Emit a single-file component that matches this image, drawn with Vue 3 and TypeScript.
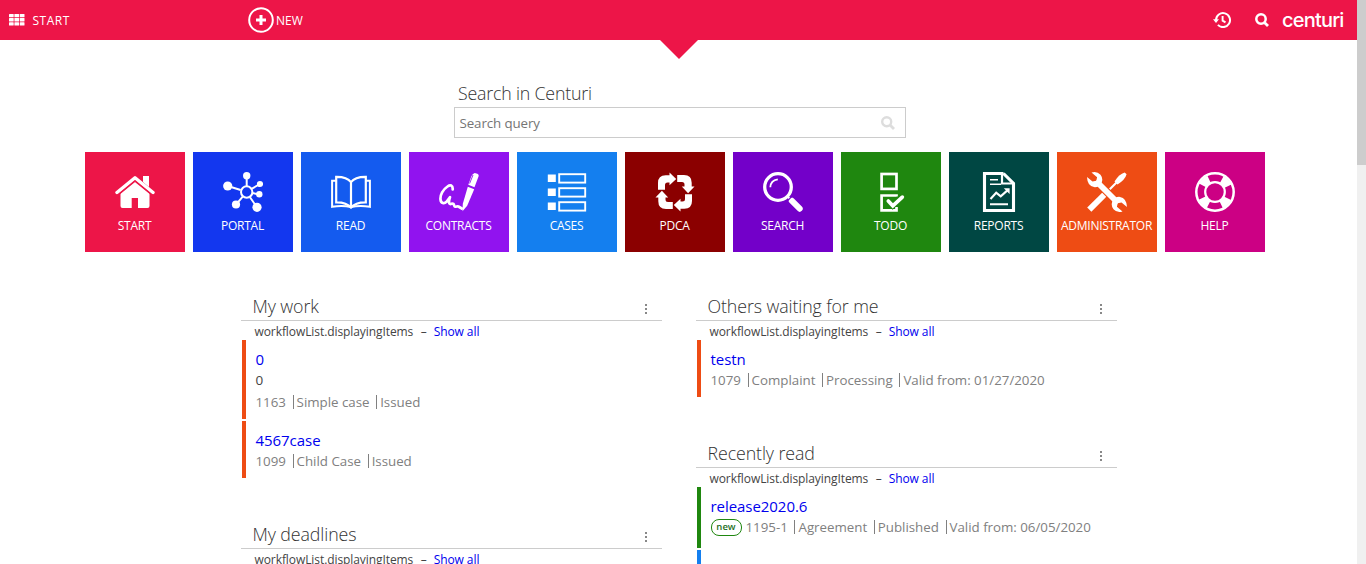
<script setup lang="ts">
interface Tile {
  label: string
  tone: string
}
interface Item {
  title: string
  note?: string
  meta: string[]
  tone: string
  badge?: string
}
interface Section {
  title: string
  items: Item[]
}

const tiles: Tile[] = [
  { label: 'START', tone: 'start' },
  { label: 'PORTAL', tone: 'portal' },
  { label: 'READ', tone: 'read' },
  { label: 'CONTRACTS', tone: 'contracts' },
  { label: 'CASES', tone: 'cases' },
  { label: 'PDCA', tone: 'pdca' },
  { label: 'SEARCH', tone: 'search' },
  { label: 'TODO', tone: 'todo' },
  { label: 'REPORTS', tone: 'reports' },
  { label: 'ADMINISTRATOR', tone: 'admin' },
  { label: 'HELP', tone: 'help' },
]

const columns: Section[][] = [
  [
    {
      title: 'My work',
      items: [
        { title: '0', note: '0', meta: ['1163', 'Simple case', 'Issued'], tone: 'orange' },
        { title: '4567case', meta: ['1099', 'Child Case', 'Issued'], tone: 'orange' },
      ],
    },
    { title: 'My deadlines', items: [] },
  ],
  [
    {
      title: 'Others waiting for me',
      items: [
        { title: 'testn', meta: ['1079', 'Complaint', 'Processing', 'Valid from: 01/27/2020'], tone: 'orange' },
      ],
    },
    {
      title: 'Recently read',
      items: [
        {
          title: 'release2020.6',
          meta: ['1195-1', 'Agreement', 'Published', 'Valid from: 06/05/2020'],
          tone: 'green',
          badge: 'new',
        },
        { title: '', meta: [], tone: 'blue' },
      ],
    },
  ],
]
</script>

<template>
  <div class="page">
    <div class="content">
      <header class="topbar">
        <div class="nav-start">
          <svg class="grid-icon" width="16" height="12" viewBox="0 0 16 12" fill="#fff">
            <template v-for="r in 3" :key="r">
              <rect v-for="c in 3" :key="c" :x="(c - 1) * 5.4" :y="(r - 1) * 4.1" width="4.7" height="3.3" rx=".5" />
            </template>
          </svg>
          <span class="nav-text">START</span>
        </div>
        <div class="nav-new">
          <svg width="26" height="26" viewBox="0 0 26 26" fill="none" stroke="#fff">
            <circle cx="13" cy="13" r="11.8" stroke-width="2" />
            <path d="M13 8v10M8 13h10" stroke-width="3" />
          </svg>
          <span class="nav-text">NEW</span>
        </div>
        <div class="tools">
          <svg class="history" width="18" height="16" viewBox="0 0 18 16" fill="none" stroke="#fff">
            <path d="M3 8a7 7 0 1 1 1.9 4.9" stroke-width="2" />
            <path d="M0 7.3h6L3 11z" fill="#fff" stroke="none" />
            <path d="M9.6 4v4.6l2.9 1.8" stroke-width="1.9" />
          </svg>
          <svg class="loupe" width="14" height="14" viewBox="0 0 14 14" fill="none" stroke="#fff">
            <circle cx="6" cy="6" r="4.7" stroke-width="2.5" />
            <path d="M9.4 9.4l3.6 3.6" stroke-width="2.8" />
          </svg>
          <span class="logo">centuri</span>
        </div>
        <div class="pointer"></div>
      </header>

      <div class="search">
        <h2>Search in Centuri</h2>
        <div class="field">
          <span>Search query</span>
          <svg width="14" height="14" viewBox="0 0 14 14" fill="none" stroke="#ddd">
            <circle cx="5.7" cy="5.7" r="4.5" stroke-width="2.4" />
            <path d="M9 9l4 4" stroke-width="2.8" />
          </svg>
        </div>
      </div>

      <nav class="tiles">
        <a v-for="t in tiles" :key="t.tone" class="tile" :class="t.tone">
          <svg width="40" height="40" viewBox="0 0 40 40" fill="none" stroke="#fff">
            <g v-if="t.tone === 'start'" fill="#fff" stroke="none">
              <path d="M28 4h6v11l-6-5z" />
              <path d="M5.5 21.5L20 9.3l14.5 12.2V34q0 2-2 2H23V26h-6.3v10H7.5q-2 0-2-2z" />
              <path d="M2 20.5L20 5.8l18 14.7" fill="none" stroke="#fff" stroke-width="3.4" stroke-linecap="round" stroke-linejoin="round" />
              <path d="M4 22.3L20 9.2l16 13.1" class="gap" fill="none" stroke-width="1.2" />
            </g>
            <g v-else-if="t.tone === 'portal'">
              <path d="M23.7 3.7V14M4.7 14l13 4M37 12l-8 4.6M36.3 22.3l-7-1.2M13 32.7l6.7-8M34 35.3l-7-10" stroke-width="2" />
              <circle cx="23.7" cy="20" r="5.7" stroke-width="2" />
              <g fill="#fff" stroke="none">
                <circle cx="23.7" cy="3.8" r="3.7" />
                <circle cx="4.7" cy="14" r="4.6" />
                <circle cx="37" cy="12" r="3.1" />
                <circle cx="36.3" cy="22.3" r="3.2" />
                <circle cx="13" cy="32.5" r="4.1" />
                <circle cx="34" cy="35.3" r="4.6" />
              </g>
            </g>
            <g v-else-if="t.tone === 'read'" stroke-width="2.2">
              <path d="M20 10.2C17 6.2 12 4.8 5.2 4.9v25.4c6.8-.1 11.3 1 14.8 5.2 3.5-4.2 8-5.3 14.8-5.2V4.9C28 4.8 23 6.2 20 10.2zV35" />
              <path d="M5 8.8H1.1v26c7-1.3 12.9-1.2 18.9.3 6-1.5 11.9-1.6 18.9-.3v-26H35" stroke-width="2" />
            </g>
            <g v-else-if="t.tone === 'contracts'">
              <path d="M13.7 17.5c.3-4.500-2.500-5-5.200-3C4 17.500 1 23 1.500 27.500c.4 4 3.700 4.500 6 2.300 1.700-1.800 2.700-3.500 3.500-4.600-.8 2.500-1.500 4.800-.6 6.300 1.200 1.600 2.700-.8 3.900.2 1 .9.500 2.600 1.900 3 1.200.2 2-.7 3.200-.2l3.400 2" stroke-width="2.7" stroke-linecap="round" stroke-linejoin="round" />
              <path d="M28.8 14.8l6.400 2.400-7 16.500-4.700 5.500.3-7.500z" fill="#fff" stroke="none" />
              <path d="M29.300 12.800l3.200-8.700q.9-2 3.200-3l2.700.6q1.700.8 1.100 2.900l-4 10.700z" fill="#fff" stroke="none" />
              <path d="M30.600 11.500l3.400-8.500" class="gap" stroke-width=".9" />
            </g>
            <g v-else-if="t.tone === 'cases'">
              <template v-for="n in 3" :key="n">
                <rect x=".8" :y="n * 14 - 11.5" width="8" height="7.5" fill="#fff" stroke="none" />
                <rect x="12.2" :y="n * 14 - 11.8" width="26" height="8.4" stroke-width="1.9" />
              </template>
            </g>
            <g v-else-if="t.tone === 'pdca'" fill="#fff" stroke="none">
              <path v-for="n in 4" :key="n" :transform="`rotate(${(n - 1) * 90} 20 20)`" d="M3 17.8V11q0-7.700 7.700-7.700h3.800V.5l6.700 6.400-6.700 6.300v-2.700h-2q-2.500 0-2.500 2.500v4.800z" />
            </g>
            <g v-else-if="t.tone === 'search'">
              <circle cx="15" cy="15" r="13.3" stroke-width="3.3" />
              <path d="M7.3 15.2q.3-6.700 7.500-7.900" stroke-width="1.8" />
              <path d="M24 24l4 4" stroke-width="2.2" />
              <path d="M28.7 28.7l8 8" stroke-width="6" stroke-linecap="round" />
              <path d="M23.7 29.7l6-6" class="gap" stroke-width="1.2" />
            </g>
            <g v-else-if="t.tone === 'todo'" stroke-width="2.7">
              <rect x="10.6" y="2" width="14.9" height="14.9" />
              <path d="M25.5 24.5v-1H10.600v14.900h14.900V35" />
              <path d="M17.3 28.5l4.500 5 9.500-8.700" class="gap" stroke-width="6" />
              <path d="M17.3 29l4.500 4.800 9.500-8.700" stroke-width="3.7" stroke-linecap="round" />
            </g>
            <g v-else-if="t.tone === 'reports'">
              <path d="M24.5 1.500h-19v37h29V11.500L24.500 1.500" stroke-width="3.1" />
              <path d="M23 1.500v10h11.500" stroke-width="2.2" />
              <path d="M11 7.700h8M11 12.300h11" stroke-width="1.5" />
              <path d="M11.5 27l5.700-6.200 4.500 3.600 7-6.300M11 32.300h18" stroke-width="2.1" />
              <path d="M24.8 16.300h5.800v5.800z" fill="#fff" stroke="none" />
            </g>
            <g v-else-if="t.tone === 'admin'">
              <path d="M2.3 37.700L18 22" stroke-width="5.9" />
              <path d="M22.5 17.500l7-7" stroke-width="2.2" />
              <path d="M27.500 9.500Q32 2 37.700.4l1.900 1.900Q38 8 30.500 12.500z" fill="#fff" stroke="none" />
              <path d="M10 10l20 20" class="gap" stroke-width="8" />
              <path d="M9 9l22 22" stroke-width="5.8" />
              <path d="M4.5.6Q9.800-1.200 13.500 2.800q2.800 3.600 1.200 7.600-2.600 5.200-7.700 4.700Q.3 13.800 0 5l5.500 4.500 3.800-.7.800-3.600zM35.500 39.400q-5.300 1.800-9-2.200-2.800-3.600-1.200-7.600 2.600-5.200 7.700-4.700Q39.700 26.200 40 35l-5.500-4.500-3.800.7-.8 3.600z" fill="#fff" stroke="none" />
            </g>
            <g v-else>
              <circle cx="20" cy="20" r="18.7" stroke-width="2.5" />
              <circle cx="20" cy="20" r="9.8" stroke-width="2.2" />
              <circle cx="20" cy="20" r="14" stroke-width="8" stroke-dasharray="9 12.99" stroke-dashoffset="-6.5" />
            </g>
          </svg>
          <span>{{ t.label }}</span>
        </a>
      </nav>

      <main class="columns">
        <div v-for="(col, ci) in columns" :key="ci" class="column">
          <section v-for="s in col" :key="s.title">
            <div class="head">
              <h3>{{ s.title }}</h3>
              <svg width="3" height="11" viewBox="0 0 3 11" fill="#888">
                <rect x="0" y="0" width="2" height="2" />
                <rect x="0" y="4" width="2" height="2" />
                <rect x="0" y="8" width="2" height="2" />
              </svg>
            </div>
            <div class="sub">
              <span>workflowList.displayingItems</span><span class="dash">–</span><a>Show all</a>
            </div>
            <article v-for="(it, ii) in s.items" :key="ii" class="item" :class="[it.tone, { badged: it.badge }]">
              <a class="title">{{ it.title }}</a>
              <div v-if="it.note" class="note">{{ it.note }}</div>
              <div class="meta">
                <span v-if="it.badge" class="badge">{{ it.badge }}</span>
                <span v-for="m in it.meta" :key="m" class="part">{{ m }}</span>
              </div>
            </article>
          </section>
        </div>
      </main>
    </div>
    <div class="scroll"><div class="thumb"></div></div>
  </div>
</template>

<style>
html,
body {
  margin: 0;
  overflow: hidden;
}
</style>

<style scoped>
.page {
  display: flex;
  height: 564px;
  overflow: hidden;
  background: #fff;
  font-family: "Open Sans", "Noto Sans", sans-serif;
  color: #444;
}
.content {
  width: 1357px;
}
.scroll {
  width: 9px;
  background: #f0f0f0;
}
.thumb {
  height: 165px;
  background: #cdcdcd;
}
.topbar {
  position: relative;
  display: flex;
  align-items: center;
  height: 40px;
  background: #ed1548;
  color: #fff;
}
.nav-start {
  display: flex;
  align-items: center;
  width: 238.5px;
  padding-left: 9px;
  gap: 7.5px;
}
.nav-text {
  font-size: 12px;
  font-weight: 500;
  line-height: 16px;
  margin-top: 1px;
}
.nav-start .nav-text {
  letter-spacing: 0.5px;
}
.nav-new {
  display: flex;
  align-items: center;
  gap: 2.5px;
}
.tools {
  display: flex;
  align-items: center;
  margin-left: auto;
  padding-right: 14px;
}
.loupe {
  margin: 0 13px 0 24px;
}
.logo {
  width: 61px;
  font-family: Inter, sans-serif;
  font-size: 20px;
  font-weight: 450;
  line-height: 24px;
  letter-spacing: -0.8px;
  margin-top: -1px;
}
.pointer {
  position: absolute;
  top: 40px;
  left: 659.5px;
  border: 19.5px solid transparent;
  border-top: 19px solid #ed1548;
  border-bottom: 0;
}
.search {
  width: 452px;
  margin: 40px 0 0 454px;
}
h2,
h3 {
  margin: 0;
  font-weight: 350;
  font-size: 17.8px;
  color: #333;
}
.search h2 {
  padding-left: 4px;
  line-height: 27px;
  letter-spacing: -0.2px;
}
.field {
  box-sizing: border-box;
  display: flex;
  align-items: center;
  justify-content: space-between;
  height: 31px;
  padding: 0 10px 0 4.5px;
  border: 1px solid #ccc;
  font-size: 13.33px;
  letter-spacing: -0.1px;
  color: #757575;
}
.tiles {
  display: flex;
  gap: 8px;
  margin: 14px 0 0 85px;
}
.tile {
  box-sizing: border-box;
  display: flex;
  flex-direction: column;
  align-items: center;
  width: 100px;
  height: 100px;
  padding-top: 20px;
  background: var(--tone);
  color: #fff;
  font-size: 12px;
  line-height: 16px;
  letter-spacing: -0.25px;
}
.tile span {
  margin: 6px 1px 0 0;
}
.gap {
  stroke: var(--tone);
}
.start { --tone: #ed1548; }
.portal { --tone: #1337ef; }
.read { --tone: #145bef; }
.contracts { --tone: #9113ef; }
.cases { --tone: #147fef; }
.pdca { --tone: #8b0000; }
.tile.search { --tone: #7300c9; margin: 0; }
.todo { --tone: #1f870f; }
.reports { --tone: #004743; }
.admin { --tone: #ee4c14; }
.help { --tone: #cc0084; }
.columns {
  display: flex;
  gap: 34px;
  margin: 41px 0 0 241px;
}
.column {
  display: flex;
  flex-direction: column;
  gap: 43px;
  width: 421px;
}
.head {
  box-sizing: border-box;
  display: flex;
  align-items: center;
  justify-content: space-between;
  height: 28px;
  padding: 0 14px 0 11.5px;
  border-bottom: 1px solid #ccc;
}
.head h3 {
  line-height: 27px;
  letter-spacing: -0.1px;
}
.head svg {
  margin-top: 6px;
}
.sub {
  height: 19px;
  padding: 1px 0 0 13.5px;
  box-sizing: border-box;
  font-size: 12px;
  line-height: 19px;
  letter-spacing: -0.08px;
  white-space: nowrap;
}
.dash {
  margin: 0 7px 0 7.5px;
}
a {
  color: #0000ee;
}
.item {
  margin-left: 1px;
  padding: 8px 0 7px 9.5px;
  border-left: 4px solid var(--bar);
}
.item + .item {
  margin-top: 2px;
}
.item.orange { --bar: #ee4c14; }
.item.green { --bar: #1f870f; }
.item.blue { --bar: #147fef; }
.item.badged {
  padding-bottom: 11px;
}
.title {
  display: block;
  height: 22px;
  font-size: 15px;
  line-height: 23px;
  letter-spacing: -0.05px;
}
.note {
  height: 22px;
  font-size: 13.5px;
  line-height: 20px;
}
.meta {
  display: flex;
  align-items: center;
  height: 20px;
  font-size: 13.33px;
  color: #808080;
}
.part {
  line-height: 14px;
  padding-right: 6.7px;
  letter-spacing: -0.02px;
}
.part + .part {
  padding-left: 3px;
  border-left: 1px solid #808080;
}
.badge {
  box-sizing: border-box;
  width: 31px;
  height: 17px;
  margin-right: 4px;
  border: 1px solid #1f870f;
  border-radius: 8px;
  color: #1f6f1f;
  font-size: 9.5px;
  font-weight: 600;
  line-height: 14px;
  text-align: center;
}
</style>
